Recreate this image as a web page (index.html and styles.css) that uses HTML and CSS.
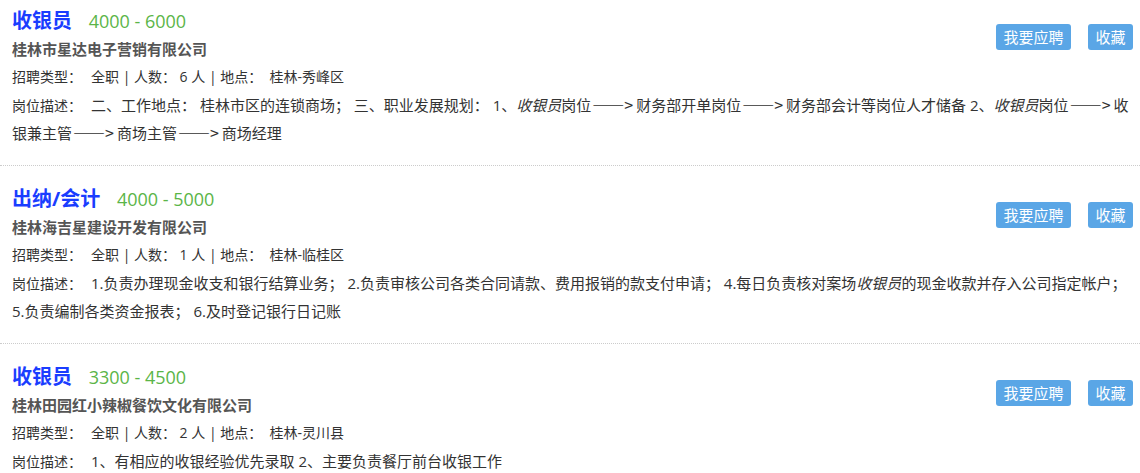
FILE: index.html
```html
<!DOCTYPE html>
<html lang="zh-CN">
<head>
  <meta charset="UTF-8" />
  <meta name="viewport" content="width=device-width, initial-scale=1.0" />
  <title>职位列表</title>
  <link rel="stylesheet" href="styles.css">
</head>
<body>
  <div class="job-list">

    <div class="job">
      <div class="job-actions">
        <button class="btn">我要应聘</button>
        <button class="btn">收藏</button>
      </div>
      <div class="job-title">
        <a class="job-name" href="#">收银员</a>
        <span class="salary">4000 - 6000</span>
      </div>
      <div class="company">桂林市星达电子营销有限公司</div>
      <div class="info"><span class="label">招聘类型：</span>全职 | 人数： 6 人 | 地点：&nbsp; 桂林-秀峰区</div>
      <div class="desc"><span class="label">岗位描述：</span>二、工作地点： 桂林市区的连锁商场； 三、职业发展规划： 1、<em>收银员</em>岗位<span class="arrow">——&gt;</span>财务部开单岗位<span class="arrow">——&gt;</span>财务部会计等岗位人才储备 2、<em>收银员</em>岗位<span class="arrow">——&gt;</span>收银兼主管<span class="arrow">——&gt;</span>商场主管<span class="arrow">——&gt;</span>商场经理</div>
    </div>

    <div class="job">
      <div class="job-actions">
        <button class="btn">我要应聘</button>
        <button class="btn">收藏</button>
      </div>
      <div class="job-title">
        <a class="job-name" href="#">出纳/会计</a>
        <span class="salary">4000 - 5000</span>
      </div>
      <div class="company">桂林海吉星建设开发有限公司</div>
      <div class="info"><span class="label">招聘类型：</span>全职 | 人数： 1 人 | 地点：&nbsp; 桂林-临桂区</div>
      <div class="desc"><span class="label">岗位描述：</span>1.负责办理现金收支和银行结算业务； 2.负责审核公司各类合同请款、费用报销的款支付申请； 4.每日负责核对案场<em>收银员</em>的现金收款并存入公司指定帐户； 5.负责编制各类资金报表； 6.及时登记银行日记账</div>
    </div>

    <div class="job">
      <div class="job-actions">
        <button class="btn">我要应聘</button>
        <button class="btn">收藏</button>
      </div>
      <div class="job-title">
        <a class="job-name" href="#">收银员</a>
        <span class="salary">3300 - 4500</span>
      </div>
      <div class="company">桂林田园红小辣椒餐饮文化有限公司</div>
      <div class="info"><span class="label">招聘类型：</span>全职 | 人数： 2 人 | 地点：&nbsp; 桂林-灵川县</div>
      <div class="desc"><span class="label">岗位描述：</span>1、有相应的收银经验优先录取 2、主要负责餐厅前台收银工作</div>
    </div>

  </div>
</body>
</html>
```

FILE: styles.css
```css
body { margin: 0; font-family: "Open Sans", "Noto Sans CJK SC", sans-serif; color: #333; background: #fff; }
.job { padding: 19px 7px 18px 12px; border-bottom: 1px dotted #ccc; }
.job:first-child { padding-top: 7px; }
.job-actions { float: right; margin-top: 17px; display: flex; gap: 17px; }
.btn { height: 26px; padding: 0 7.5px; border: none; border-radius: 3px; background: #5aa6e6; color: #fff; font-family: inherit; font-size: 15px; line-height: 26px; cursor: pointer; }
.job-title { height: 28px; line-height: 28px; font-size: 14px; }
.job-name { font-size: 20px; font-weight: bold; color: #1a3dff; text-decoration: none; margin-right: 13px; }
.salary { font-size: 18px; color: #5bb548; }
.company { font-size: 15px; font-weight: bold; color: #555; line-height: 28px; }
.info { font-size: 14px; line-height: 28px; }
.desc { font-size: 15px; line-height: 28px; }
.label { font-size: 14px; line-height: 1; margin-right: 9px; }
.arrow { font-family: "Noto Sans CJK SC", sans-serif; font-size: 16px; line-height: 1; margin: 0 3px 0 1px; }
em { font-style: italic; }
```
